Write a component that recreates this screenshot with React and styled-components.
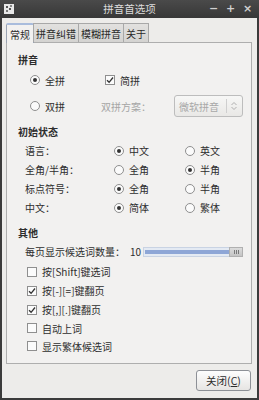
import React from "react";
import styled, { createGlobalStyle, css } from "styled-components";

const Global = createGlobalStyle`
  html, body { margin: 0; padding: 0; background: #3a3a3a; }
  body { font-family: "Noto Sans CJK SC", "DejaVu Sans", sans-serif; font-size: 10px; color: #2e2e2e; }
  * { box-sizing: border-box; }
`;

const Window = styled.div`
  width: 259px;
  height: 400px;
  background: #3b3b3b;
  display: flex;
  flex-direction: column;
  padding: 0 2px 2px 2px;
`;

const TitleBar = styled.div`
  height: 18px;
  display: flex;
  align-items: center;
  position: relative;
  background: linear-gradient(#4a4a4a, #373737);
  margin: 0 -2px;
  padding: 0 4px;
`;

const TitleText = styled.div`
  position: absolute;
  left: 0;
  right: 0;
  text-align: center;
  color: #dcdcdc;
  font-size: 10.5px;
  line-height: 18px;
`;

const WinButtons = styled.div`
  margin-left: auto;
  display: flex;
  gap: 6px;
  color: #d0d0d0;
  font-weight: bold;
  font-family: "DejaVu Sans", sans-serif;
  font-size: 11px;
  z-index: 1;
  margin-right: 2px;
`;

const WinBtn = styled.span`
  width: 11px;
  text-align: center;
  line-height: 18px;
`;

const Body = styled.div`
  flex: 1;
  background: #edecea;
  display: flex;
  flex-direction: column;
  padding: 4px 4px 0 3px;
`;

const TabBar = styled.div`
  display: flex;
  align-items: flex-end;
  height: 20px;
  position: relative;
  z-index: 1;
  padding-left: 1px;
`;

const Tab = styled.div`
  height: 19px;
  padding: 0 2px;
  display: flex;
  align-items: center;
  font-size: 10px;
  border: 1px solid #a8a8a8;
  border-bottom: none;
  margin-right: -1px;
  background: linear-gradient(#e2e1df, #d4d3d1);
  color: #2a2a2a;
  ${(p) =>
    p.$active &&
    css`
      height: 20px;
      margin-bottom: -1px;
      background: #f2f1f0;
      border-color: #9aa3b3;
      border-top: 2px solid #a9bcdc;
      border-radius: 2px 2px 0 0;
      padding: 0 3px;
    `}
`;

const Panel = styled.div`
  border: 1px solid #aeaeae;
  background: #f2f1f0;
  height: 322px;
  padding: 8px 0 0 11px;
  margin-left: 1px;
  margin-right: 1px;
  display: flex;
  flex-direction: column;
`;

const Heading = styled.div`
  font-weight: bold;
  height: 18px;
  line-height: 18px;
  margin-top: ${(p) => p.$mt || 0}px;
`;

const Row = styled.div`
  display: grid;
  grid-template-columns: ${(p) => p.$cols || "87px 1fr"};
  align-items: center;
  height: ${(p) => p.$h || 19}px;
  margin-top: ${(p) => p.$mt || 0}px;
  padding-left: ${(p) => p.$pl || 0}px;
  white-space: nowrap;
`;

const Opt = styled.label`
  display: flex;
  align-items: center;
  gap: 5px;
  color: ${(p) => (p.$disabled ? "#a5a5a5" : "#2e2e2e")};
`;

const RadioMark = styled.span`
  width: 10px;
  height: 10px;
  border-radius: 50%;
  border: 1px solid #8f8f8f;
  background: #fbfbfb;
  display: inline-flex;
  align-items: center;
  justify-content: center;
  &::after {
    content: "";
    width: 4px;
    height: 4px;
    border-radius: 50%;
    background: ${(p) => (p.$on ? "#333" : "transparent")};
  }
`;

const CheckMark = styled.span`
  width: 10px;
  height: 10px;
  border: 1px solid #8f8f8f;
  background: #fbfbfb;
  display: inline-flex;
  align-items: center;
  justify-content: center;
`;

const Label = styled.span`
  color: ${(p) => (p.$disabled ? "#a5a5a5" : "#2e2e2e")};
`;

const Combo = styled.div`
  width: 69px;
  height: 22px;
  border: 1px solid #bdbdbd;
  border-radius: 3px;
  background: linear-gradient(#f7f7f6, #e9e8e6);
  display: flex;
  align-items: center;
  color: #a8a8a8;
  padding-left: 4px;
`;

const ComboText = styled.span`
  flex: 1;
`;

const ComboSep = styled.span`
  width: 1px;
  height: 14px;
  background: #cfcfcf;
  margin-right: 3px;
`;

const Slider = styled.div`
  width: 100px;
  height: 10px;
  border: 1px solid #c9d3e3;
  background: #e4eaf3;
  display: flex;
  align-items: center;
  padding: 0 1px;
`;

const SliderFill = styled.div`
  flex: 1;
  height: 4px;
  background: #8ea6d6;
`;

const Handle = styled.div`
  width: 14px;
  height: 10px;
  background: linear-gradient(#dcdcdc, #c4c4c4);
  border: 1px solid #b0b0b0;
  margin-right: -2px;
  display: flex;
  align-items: center;
  justify-content: center;
  gap: 1px;
  & > i {
    width: 1px;
    height: 4px;
    background: #7a7a7a;
  }
`;

const Footer = styled.div`
  flex: 1;
  display: flex;
  justify-content: flex-end;
  align-items: flex-start;
  padding: 6px 2px 0 0;
`;

const Button = styled.button`
  width: 55px;
  height: 21px;
  border: 1px solid #8d9096;
  border-radius: 3px;
  background: linear-gradient(#fdfdfd, #e6e5e3);
  font-family: inherit;
  font-size: 10.5px;
  color: #2e2e2e;
  padding: 0;
  u { text-decoration: underline; }
`;

const Radio = ({ on, children, disabled }) => (
  <Opt $disabled={disabled}>
    <RadioMark $on={on} />
    <span>{children}</span>
  </Opt>
);

const Check = ({ on, children }) => (
  <Opt>
    <CheckMark>
      {on && (
        <svg width="8" height="8" viewBox="0 0 8 8">
          <path d="M1 4.2 L3.1 6.3 L7 1.5" fill="none" stroke="#333" strokeWidth="1.3" />
        </svg>
      )}
    </CheckMark>
    <span>{children}</span>
  </Opt>
);

export default function App() {
  return (
    <>
      <Global />
      <Window>
        <TitleBar>
          <svg width="10" height="10" viewBox="0 0 10 10" style={{ zIndex: 1 }}>
            <rect x="0" y="0" width="10" height="10" fill="#e8e8e8" />
            <rect x="2" y="2" width="2" height="2" fill="#555" />
            <rect x="5" y="4" width="2" height="2" fill="#555" />
            <rect x="2" y="6" width="2" height="2" fill="#777" />
            <rect x="6" y="1" width="2" height="2" fill="#888" />
          </svg>
          <TitleText>拼音首选项</TitleText>
          <WinButtons>
            <WinBtn>−</WinBtn>
            <WinBtn>+</WinBtn>
            <WinBtn>×</WinBtn>
          </WinButtons>
        </TitleBar>
        <Body>
          <TabBar>
            <Tab $active>常规</Tab>
            <Tab>拼音纠错</Tab>
            <Tab>模糊拼音</Tab>
            <Tab>关于</Tab>
          </TabBar>
          <Panel>
            <Heading>拼音</Heading>
            <Row $h={20} $mt={1} $pl={12} $cols="75px 1fr">
              <Radio on>全拼</Radio>
              <Check on>简拼</Check>
            </Row>
            <Row $h={22} $mt={5} $pl={12} $cols="71px 73px 1fr">
              <Radio>双拼</Radio>
              <Label $disabled>双拼方案：</Label>
              <Combo>
                <ComboText>微软拼音</ComboText>
                <ComboSep />
                <svg width="8" height="10" viewBox="0 0 8 10" style={{ marginRight: 4 }}>
                  <path d="M1.5 4 L4 1.5 L6.5 4 M1.5 6 L4 8.5 L6.5 6" fill="none" stroke="#b0b0b0" strokeWidth="1" />
                </svg>
              </Combo>
            </Row>
            <Heading $mt={6}>初始状态</Heading>
            <Row $pl={7} $cols="89px 71px 1fr">
              <Label>语言：</Label>
              <Radio on>中文</Radio>
              <Radio>英文</Radio>
            </Row>
            <Row $pl={7} $cols="89px 71px 1fr">
              <Label>全角/半角：</Label>
              <Radio>全角</Radio>
              <Radio on>半角</Radio>
            </Row>
            <Row $pl={7} $cols="89px 71px 1fr">
              <Label>标点符号：</Label>
              <Radio on>全角</Radio>
              <Radio>半角</Radio>
            </Row>
            <Row $pl={7} $cols="89px 71px 1fr">
              <Label>中文：</Label>
              <Radio on>简体</Radio>
              <Radio>繁体</Radio>
            </Row>
            <Heading $mt={7}>其他</Heading>
            <Row $pl={7} $cols="105px 13px 1fr">
              <Label>每页显示候选词数量：</Label>
              <Label>10</Label>
              <Slider>
                <SliderFill />
                <Handle>
                  <i />
                  <i />
                  <i />
                </Handle>
              </Slider>
            </Row>
            <Row $pl={9} $cols="1fr" $h={19} $mt={1}>
              <Check>按[Shift]键选词</Check>
            </Row>
            <Row $pl={9} $cols="1fr" $h={19}>
              <Check on>按[-][=]键翻页</Check>
            </Row>
            <Row $pl={9} $cols="1fr" $h={19}>
              <Check on>按[,][.]键翻页</Check>
            </Row>
            <Row $pl={9} $cols="1fr" $h={18}>
              <Check>自动上词</Check>
            </Row>
            <Row $pl={9} $cols="1fr" $h={18}>
              <Check>显示繁体候选词</Check>
            </Row>
          </Panel>
          <Footer>
            <Button>
              关闭(<u>C</u>)
            </Button>
          </Footer>
        </Body>
      </Window>
    </>
  );
}
